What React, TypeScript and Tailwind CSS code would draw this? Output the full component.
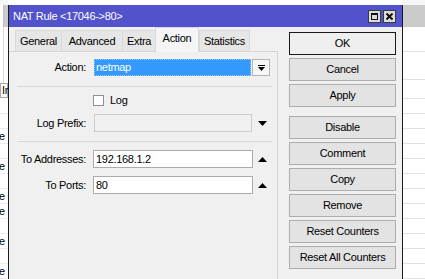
import React from 'react';

const tabs = [
  { label: 'General', w: 'w-[47px]' },
  { label: 'Advanced', w: 'w-[62px]' },
  { label: 'Extra', w: 'w-[34px]' },
  { label: 'Action', w: 'w-[44px]', active: true },
  { label: 'Statistics', w: 'w-[51px]' },
];

const topButtons = ['OK', 'Cancel', 'Apply'];
const lowerButtons = ['Disable', 'Comment', 'Copy', 'Remove', 'Reset Counters', 'Reset All Counters'];

// rows of the list that sits behind the dialog; true = the row shows the tail of a word
const leftRows = [false, false, true, false, true, false, true, true, false, true, false, true];

function ArrowDown() {
  return (
    <svg width="9" height="5" viewBox="0 0 9 5">
      <polygon points="0,0 9,0 4.5,5" fill="#000" />
    </svg>
  );
}

function ArrowUp() {
  return (
    <svg width="9" height="5" viewBox="0 0 9 5">
      <polygon points="0,5 9,5 4.5,0" fill="#000" />
    </svg>
  );
}

function FieldRow({ label, children, className }: { label: string; children: React.ReactNode; className: string }) {
  return (
    <div className={`flex items-center ${className}`}>
      <div className="w-[77px] text-right leading-none">{label}</div>
      {children}
    </div>
  );
}

export default function App() {
  return (
    <div className="relative h-[279px] w-[425px] overflow-hidden bg-white text-[11px] tracking-[-0.3px] text-black font-['Liberation_Sans',Arial,sans-serif]">
      {/* list window behind the dialog */}
      <div className="flex h-full">
        <div className="flex w-[8px] flex-col overflow-hidden">
          <div className="h-[5px] bg-[#f6f6f6]" />
          <div className="h-[22px] border-l border-[#bdbdbd] bg-[#cbcbcb] ml-[3px]" />
          <div className="h-[56px] border-l border-[#dcdcdc] ml-[3px]" />
          <div className="flex h-[15px] items-center border border-[#a8a8a8] bg-white pl-[1px] leading-none">In</div>
          <div className="h-px" />
          {leftRows.map((hasText, i) => (
            <div key={i} className="flex h-[15px] items-center border-b border-[#ececec] leading-none">
              {hasText ? <span className="-ml-[1px]">e</span> : null}
            </div>
          ))}
        </div>
        <div className="flex-1" />
        <div className="flex w-[23px] flex-col">
          <div className="h-[5px] bg-[#f6f6f6]" />
          <div className="h-[22px] bg-[#cbcbcb]" />
          <div className="h-[25px] border-b border-[#e2e2e2]" />
          <div className="h-[28px] border-b border-[#e2e2e2]" />
          <div className="h-[19px] border-b border-[#e2e2e2]" />
          {Array.from({ length: 12 }).map((_, i) => (
            <div key={i} className="h-[15px] border-b border-[#e2e2e2]" />
          ))}
        </div>
      </div>

      {/* NAT rule dialog */}
      <div className="absolute left-[8px] top-[5px] flex h-[280px] w-[395px] flex-col border-x border-[#1c1c1c] bg-[#f0f0f0]">
        <div className="flex h-[22px] items-center justify-between bg-[#5252cc] pl-[4px] pr-[6px] text-white">
          <span className="leading-none">NAT Rule &lt;17046-&gt;80&gt;</span>
          <div className="flex gap-[2px]">
            <div className="flex h-[13px] w-[13px] items-center justify-center border border-[#3a3a3a] bg-[#dcdcdc]">
              <div className="h-[7px] w-[7px] border border-t-2 border-[#111]" />
            </div>
            <div className="flex h-[13px] w-[13px] items-center justify-center border border-[#3a3a3a] bg-[#dcdcdc]">
              <svg width="7" height="7" viewBox="0 0 7 7">
                <path d="M0.5 0.5 L6.5 6.5 M6.5 0.5 L0.5 6.5" stroke="#111" strokeWidth="2" />
              </svg>
            </div>
          </div>
        </div>

        <div className="flex flex-1">
          {/* tabs + page */}
          <div className="flex w-[269px] flex-col pt-[1px]">
            <div className="flex h-[24px] items-end pl-[6px]">
              {tabs.map((t) =>
                t.active ? (
                  <div
                    key={t.label}
                    className={`relative z-10 flex h-[25px] items-center justify-center border-x border-t border-[#d9d9d9] bg-[#f5f5f5] pb-[3px] leading-none ${t.w}`}
                  >
                    {t.label}
                  </div>
                ) : (
                  <div
                    key={t.label}
                    className={`-mr-px flex h-[22px] items-center justify-center border-x border-t border-[#d9d9d9] bg-[#e6e6e6] leading-none ${t.w}`}
                  >
                    {t.label}
                  </div>
                ),
              )}
            </div>
            <div className="-mt-px flex flex-1 flex-col border-r border-t border-[#d6d6d6]">
              <FieldRow label="Action:" className="mt-[7px] h-[17px]">
                <div className="ml-[8px] flex h-[17px] w-[157px] items-center border border-dotted border-[#9cc8f2] bg-[#3399ff] pl-[1px] leading-none text-white">
                  netmap
                </div>
                <div className="ml-[1px] flex h-[17px] w-[18px] flex-col items-center justify-center border border-[#b4b4b4] bg-[#f7f7f7]">
                  <div className="mb-[1px] h-px w-[7px] bg-black" />
                  <svg width="7" height="4" viewBox="0 0 7 4">
                    <polygon points="0,0 7,0 3.5,4" fill="#000" />
                  </svg>
                </div>
              </FieldRow>

              <div className="ml-[8px] mt-[10px] h-px w-[255px] bg-[#d8d8d8]" />

              <div className="ml-[84px] mt-[8px] flex h-[11px] items-center">
                <div className="h-[11px] w-[11px] border border-[#8f8f8f] bg-white" />
                <span className="ml-[6px] leading-none">Log</span>
              </div>

              <FieldRow label="Log Prefix:" className="mt-[8px] h-[18px]">
                <div className="ml-[8px] h-[18px] w-[158px] border border-[#cccccc] bg-[#f0f0f0]" />
                <div className="ml-[1px] flex w-[18px] justify-center">
                  <ArrowDown />
                </div>
              </FieldRow>

              <div className="ml-[8px] mt-[9px] h-px w-[255px] bg-[#d8d8d8]" />

              <FieldRow label="To Addresses:" className="mt-[8px] h-[18px]">
                <div className="ml-[7px] flex h-[18px] w-[160px] items-center border border-[#ababab] bg-white pl-[2px] leading-none">
                  192.168.1.2
                </div>
                <div className="flex w-[19px] justify-center">
                  <ArrowUp />
                </div>
              </FieldRow>

              <FieldRow label="To Ports:" className="mt-[8px] h-[18px]">
                <div className="ml-[7px] flex h-[18px] w-[160px] items-center border border-[#ababab] bg-white pl-[2px] leading-none">
                  80
                </div>
                <div className="flex w-[19px] justify-center">
                  <ArrowUp />
                </div>
              </FieldRow>
            </div>
          </div>

          {/* command buttons */}
          <div className="ml-[11px] flex w-[107px] flex-col gap-[3px] pt-[5px]">
            {topButtons.map((b) => (
              <div
                key={b}
                className={`flex h-[23px] items-center justify-center border leading-none ${
                  b === 'OK' ? 'border-[#1a1a1a] bg-[#efefef]' : 'border-[#adadad] bg-[#e3e3e3]'
                }`}
              >
                {b}
              </div>
            ))}
            <div className="mt-[6px] flex flex-col gap-[3px]">
              {lowerButtons.map((b) => (
                <div key={b} className="flex h-[23px] items-center justify-center border border-[#adadad] bg-[#e3e3e3] leading-none">
                  {b}
                </div>
              ))}
            </div>
          </div>
        </div>
      </div>
    </div>
  );
}
